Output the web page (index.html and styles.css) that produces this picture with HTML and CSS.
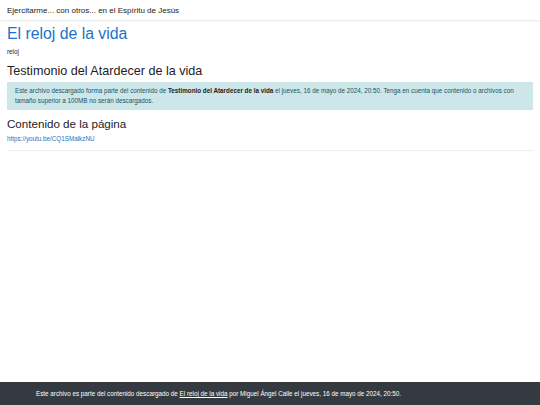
FILE: index.html
```html
<!DOCTYPE html>
<html lang="es">
<head>
<meta charset="utf-8">
<title>El reloj de la vida</title>
<link rel="stylesheet" href="styles.css">
</head>
<body>
<header class="navbar">
  <span class="brand">Ejercitarme... con otros... en el Espíritu de Jesús</span>
</header>
<main class="page">
  <h1 class="title">El reloj de la vida</h1>
  <div class="summary">reloj</div>
  <h2 class="section">Testimonio del Atardecer de la vida</h2>
  <div class="alert">Este archivo descargado forma parte del contenido de <strong>Testimonio del Atardecer de la vida</strong> el jueves, 16 de mayo de 2024, 20:50. Tenga en cuenta que contenido o archivos con tamaño superior a 100MB no serán descargados.</div>
  <h3 class="subsection">Contenido de la página</h3>
  <p class="content"><a href="#">https://youtu.be/CQ1SMalkzNU</a></p>
  <hr class="rule">
</main>
<footer class="footer">
  <span>Este archivo es parte del contenido descargado de <a href="#">El reloj de la vida</a> por Miguel Ángel Calle el jueves, 16 de mayo de 2024, 20:50.</span>
</footer>
</body>
</html>
```
FILE: styles.css
```css
html, body {
  margin: 0;
  padding: 0;
}
body {
  font-family: "Liberation Sans", Arial, sans-serif;
  color: #1d2125;
  background: #fff;
  min-height: 100vh;
  display: flex;
  flex-direction: column;
  font-size: 6.3px;
}
.navbar {
  height: 20px;
  display: flex;
  align-items: center;
  padding: 0 7px;
  background: #fff;
  box-shadow: 0 1px 2px rgba(0, 0, 0, 0.1);
  position: relative;
  z-index: 1;
}
.brand {
  font-size: 8px;
  color: #1d2125;
}
.page {
  flex: 1;
  padding: 0 7px;
}
.title {
  margin: 5px 0 0;
  font-size: 15.8px;
  line-height: 1.2;
  font-weight: normal;
  color: #1a73c7;
}
.summary {
  margin-top: 4px;
  font-size: 6.3px;
  line-height: 8.4px;
}
.section {
  margin: 8px 0 0;
  font-size: 12.6px;
  line-height: 1.2;
  font-weight: normal;
}
.alert {
  margin-top: 3px;
  background: #cce6ea;
  color: #24535c;
  padding: 4px 8px;
  font-size: 6.3px;
  line-height: 10px;
}
.alert strong {
  color: #1d2125;
}
.subsection {
  margin: 7px 0 0;
  font-size: 11.6px;
  line-height: 1.2;
  font-weight: normal;
}
.content {
  margin: 3px 0 0;
  font-size: 6.3px;
  line-height: 9px;
}
.content a {
  color: #1a73c7;
  text-decoration: none;
}
.rule {
  margin: 7px 0 0;
  border: 0;
  border-top: 1px solid #eceeef;
}
.footer {
  height: 23px;
  background: #343a40;
  color: #fff;
  display: flex;
  align-items: center;
  padding-left: 36px;
  font-size: 6.3px;
}
.footer a {
  color: #fff;
  text-decoration: underline;
}
```
